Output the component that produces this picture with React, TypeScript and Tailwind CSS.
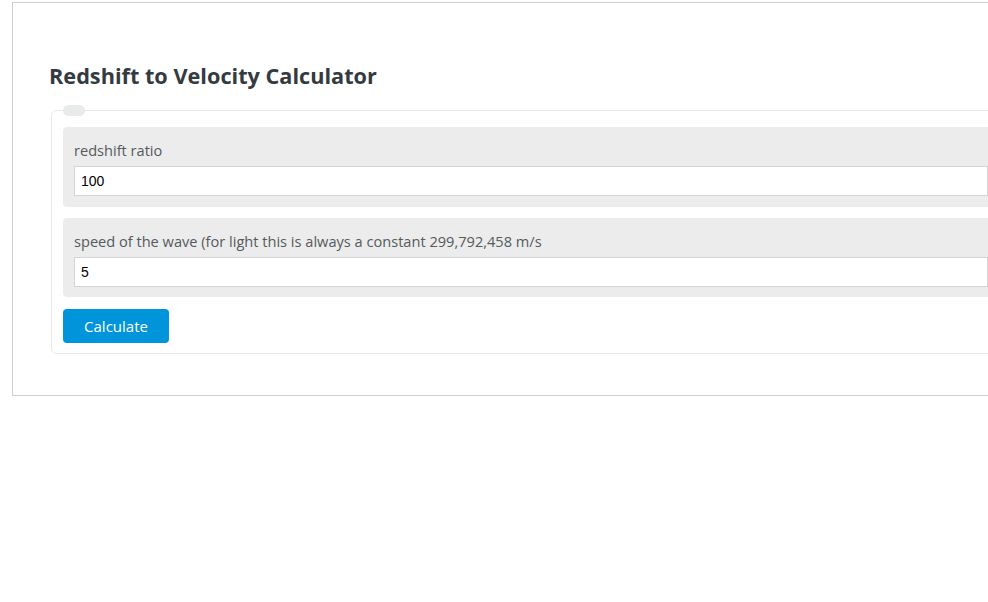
export default function App() {
  return (
    <div className="w-[988px] h-[602px] overflow-hidden bg-white">
      <div
        className="ml-[12px] mt-[2px] w-[1000px] h-[394px] border border-[#cfcfcf] pl-[36px] pt-[59px]"
        style={{ fontFamily: '"Open Sans", "Noto Sans", sans-serif' }}
      >
        <h1 className="text-[21.7px] leading-[28px] font-bold text-[#333a40]">
          Redshift to Velocity Calculator
        </h1>

        {/* ── Form box ── */}
        <div className="relative ml-[2px] mt-[20px] rounded-[5px] border border-[#e8e8e8] px-[11px] pt-[16px] pb-[10px]">
          <span className="absolute left-[11px] top-[-6px] w-[22px] h-[11px] rounded-full bg-[#e9eaea]" />

          <div className="rounded-[4px] bg-[#ebeceb] px-[11px] pt-[13px] pb-[11px]">
            <label className="block text-[14.6px] leading-[20px] text-[#555a5e] mb-[6px]">
              redshift ratio
            </label>
            <input
              readOnly
              value="100"
              className="block w-full h-[30px] border border-[#d4d4d4] bg-white px-[6px] text-[14px] text-black outline-none"
              style={{ fontFamily: '"Liberation Sans", Arial, sans-serif' }}
            />
          </div>

          <div className="mt-[11px] rounded-[4px] bg-[#ebeceb] px-[11px] pt-[13px] pb-[10px]">
            <label className="block text-[14.6px] leading-[20px] text-[#555a5e] mb-[6px]">
              speed of the wave (for light this is always a constant 299,792,458 m/s
            </label>
            <input
              readOnly
              value="5"
              className="block w-full h-[30px] border border-[#d4d4d4] bg-white px-[6px] text-[14px] text-black outline-none"
              style={{ fontFamily: '"Liberation Sans", Arial, sans-serif' }}
            />
          </div>

          <button className="mt-[12px] block w-[106px] h-[34px] rounded-[4px] bg-[#0095da] text-white text-[15px]">
            Calculate
          </button>
        </div>
      </div>
    </div>
  );
}
